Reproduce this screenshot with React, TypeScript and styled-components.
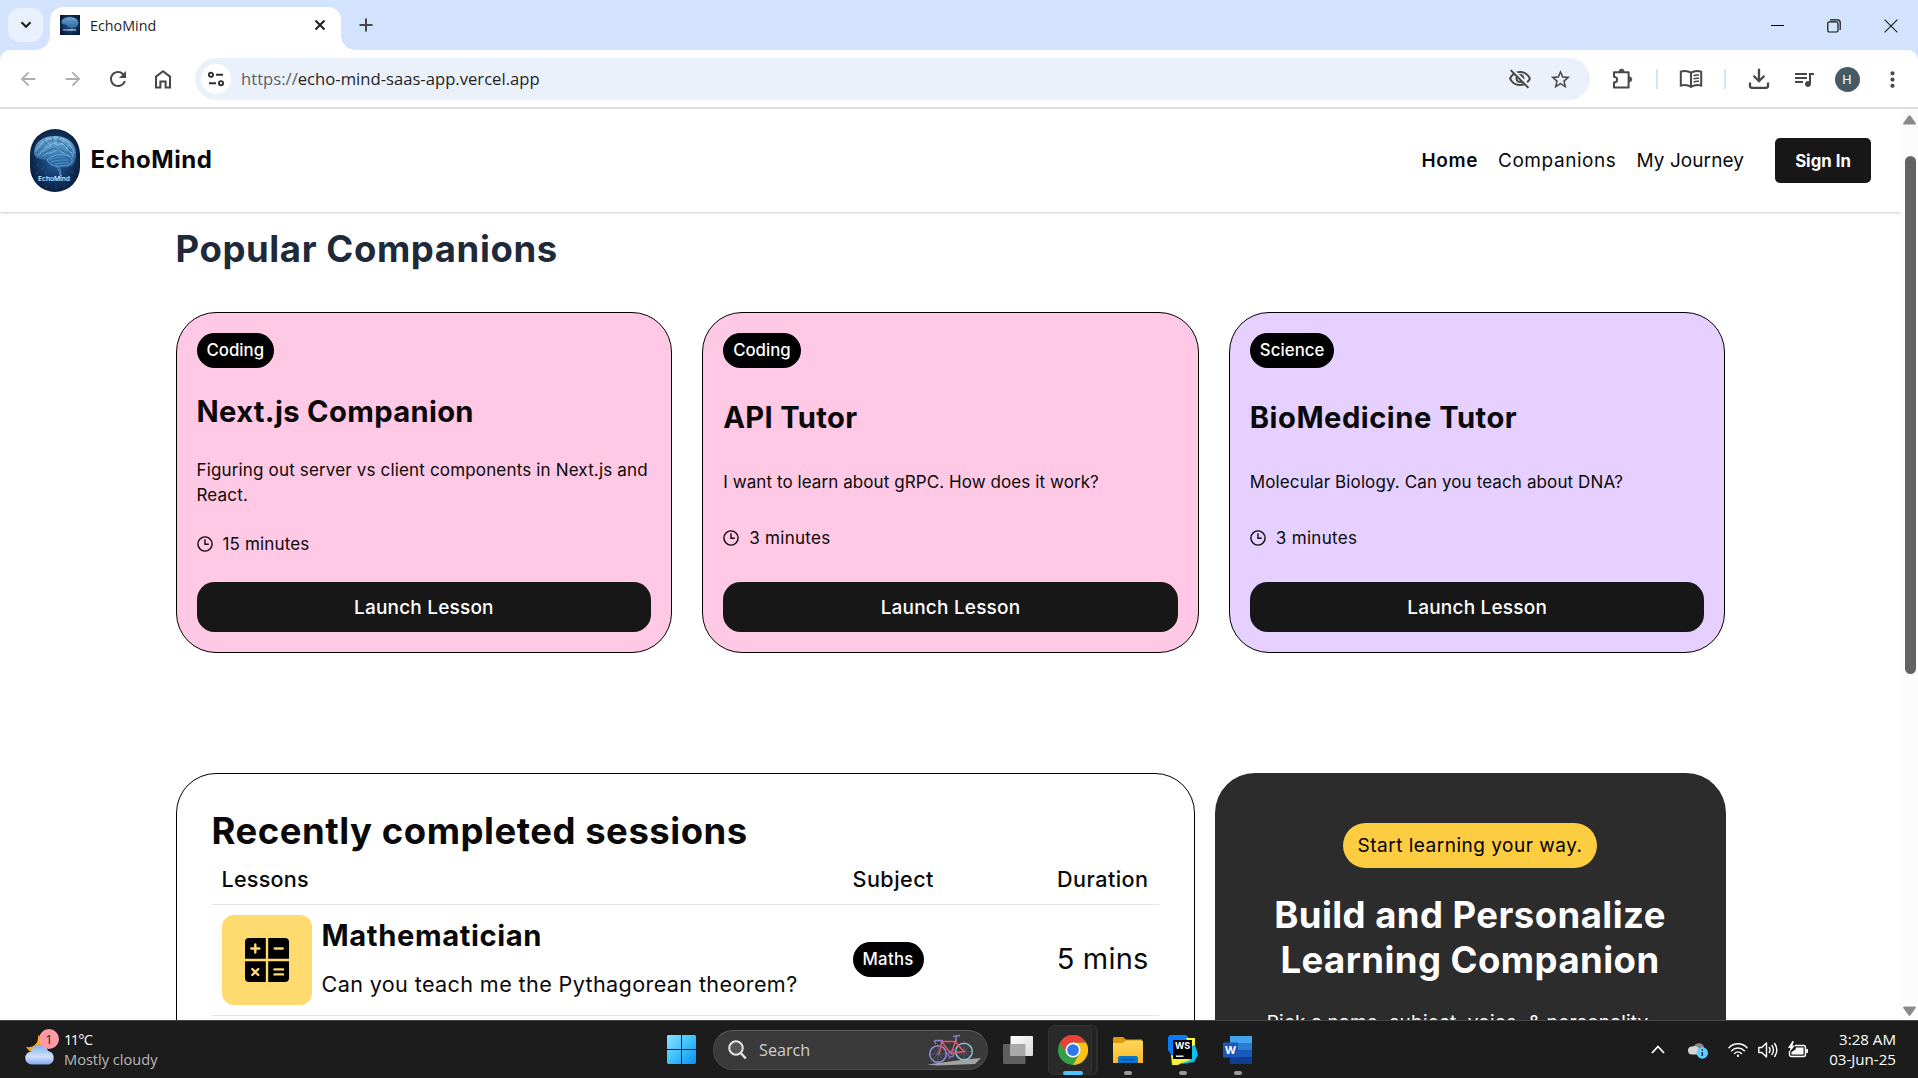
import React from 'react';
import styled, { createGlobalStyle } from 'styled-components';
import {
  MdArrowBack,
  MdArrowForward,
  MdMoreVert,
  MdOutlineVisibilityOff,
  MdQueueMusic,
  MdRefresh,
  MdStarBorder,
} from 'react-icons/md';

const GlobalStyle = createGlobalStyle`
  * { box-sizing: border-box; }
  body { margin: 0; background: #fff; }
  h1, h2, h3, p { margin: 0; }
  svg { display: block; flex: none; }
  button { border: 0; font: inherit; padding: 0; }
`;

const UI_FONT = '"Open Sans", "Noto Sans", sans-serif';
const SITE_FONT = 'Inter, "Open Sans", sans-serif';

interface Tracked {
  $ls?: number;
}

const tracking = ({ $ls = 0 }: Tracked) => `${$ls}px`;

/* ---------- Window ---------- */

const Screen = styled.div`
  width: 1918px;
  height: 1078px;
  display: flex;
  flex-direction: column;
  overflow: hidden;
  background: #fff;
  color: #0a0a0a;
`;

const TabStrip = styled.div`
  height: 50px;
  flex: none;
  display: flex;
  align-items: flex-end;
  padding-left: 8px;
  background: #d3e3fd;
  font-family: ${UI_FONT};
`;

const TabSearch = styled.button`
  width: 35px;
  height: 34px;
  margin-bottom: 8px;
  border-radius: 12px;
  background: #e9f1fe;
  display: grid;
  place-items: center;
`;

const Tab = styled.div`
  position: relative;
  width: 291px;
  height: 43px;
  margin-left: 7px;
  padding: 0 15px 7px 10px;
  display: flex;
  align-items: center;
  gap: 10px;
  border-radius: 13px 13px 0 0;
  background: #fff;

  &::before,
  &::after {
    content: '';
    position: absolute;
    bottom: 0;
    width: 14px;
    height: 14px;
  }
  &::before {
    left: -14px;
    background: radial-gradient(circle at 0 0, transparent 13.5px, #fff 14px);
  }
  &::after {
    right: -14px;
    background: radial-gradient(circle at 100% 0, transparent 13.5px, #fff 14px);
  }
`;

const TabTitle = styled.span`
  flex: 1;
  padding-top: 1px;
  font-size: 14.3px;
  line-height: 20px;
  color: #1f1f1f;
`;

const NewTab = styled.div`
  height: 50px;
  margin-left: 18px;
  display: flex;
  align-items: center;
`;

const WindowButtons = styled.div`
  height: 48px;
  margin: 0 -1px 0 auto;
  display: flex;
`;

const WindowButton = styled.div`
  width: 56.5px;
  display: grid;
  place-items: center;
`;

const ToolbarBack = styled.div`
  flex: none;
  background: #d3e3fd;
`;

const Toolbar = styled.div`
  height: 59px;
  display: flex;
  align-items: center;
  padding: 1px 0 0 5px;
  border-bottom: 2px solid #dedfe0;
  border-radius: 10px 10px 0 0;
  background: #fff;
  font-family: ${UI_FONT};
`;

const Slot = styled.div<{ $w: number; $color?: string }>`
  width: ${(p) => p.$w}px;
  height: 42px;
  flex: none;
  display: grid;
  place-items: center;
  color: ${(p) => p.$color ?? '#474747'};
`;

const Omnibox = styled.div`
  width: 1395px;
  height: 42px;
  margin-left: 10px;
  padding: 0 10px 0 6px;
  display: flex;
  align-items: center;
  border-radius: 21px;
  background: #ebf1fb;
`;

const SiteInfo = styled.div`
  width: 30px;
  height: 30px;
  border-radius: 50%;
  background: #fff;
  display: grid;
  place-items: center;
`;

const Url = styled.div`
  flex: 1;
  margin-left: 10px;
  font-size: 16.65px;
  line-height: 24px;
  color: #1f1f1f;
`;

const Scheme = styled.span`
  color: #5c5f63;
`;

const Divider = styled.div`
  width: 2px;
  height: 20px;
  background: #d3e3fd;
`;

const Avatar = styled.div`
  width: 25px;
  height: 25px;
  border-radius: 50%;
  background: #455a64;
  color: #fff;
  font: 400 13px/25px Roboto, sans-serif;
  text-align: center;
`;

/* ---------- Page ---------- */

const Viewport = styled.div`
  flex: 1;
  min-height: 0;
  display: flex;
  overflow: hidden;
`;

const Page = styled.div`
  flex: 1;
  overflow: hidden;
  font-family: ${SITE_FONT};
`;

const Navbar = styled.header`
  position: relative;
  height: 103px;
  padding: 0 30px;
  display: flex;
  align-items: center;
  justify-content: space-between;
  background: #fff;
  box-shadow: 0 1px 3px rgba(0, 0, 0, 0.13), 0 1px 2px rgba(0, 0, 0, 0.08);
`;

const Brand = styled.div`
  display: flex;
  align-items: center;
  gap: 10.5px;
`;

const BrandName = styled.span`
  margin-top: -2px;
  font-size: 24px;
  font-weight: 700;
  line-height: 35px;
  letter-spacing: 0.6px;
`;

const Nav = styled.nav`
  display: flex;
  align-items: center;
  gap: 20px;
`;

const NavLink = styled.span<Tracked & { $active?: boolean }>`
  font-size: 19px;
  line-height: 30px;
  font-weight: ${(p) => (p.$active ? 600 : 400)};
  letter-spacing: ${tracking};
`;

const SignIn = styled.button`
  width: 96px;
  height: 45px;
  margin-left: 11px;
  border-radius: 5px;
  background: #171717;
  color: #fafafa;
  font-size: 16.8px;
  font-weight: 700;
`;

const Content = styled.main`
  width: 1550px;
  margin-left: 175.5px;
  padding-top: 15px;
`;

const PageTitle = styled.h1`
  font-size: 36.5px;
  line-height: 45px;
  font-weight: 700;
  letter-spacing: 0.6px;
  color: #1e2939;
`;

const CompanionGrid = styled.section`
  margin-top: 40px;
  display: grid;
  grid-template-columns: repeat(3, 1fr);
  gap: 30px;
`;

const CompanionCard = styled.article<{ $bg: string }>`
  height: 341px;
  padding: 20px;
  display: flex;
  flex-direction: column;
  justify-content: space-between;
  border: 1px solid #000;
  border-radius: 40px;
  background: ${(p) => p.$bg};
`;

const SubjectBadge = styled.span<Tracked>`
  align-self: flex-start;
  height: 35px;
  padding: 0 10px;
  border-radius: 17.5px;
  background: #000;
  color: #fff;
  font-size: 16.8px;
  font-weight: 500;
  line-height: 35px;
  letter-spacing: ${tracking};
`;

const CompanionName = styled.h2<Tracked>`
  padding-bottom: 2px;
  font-size: 29.2px;
  line-height: 38px;
  font-weight: 700;
  letter-spacing: ${tracking};
`;

const Topic = styled.p<Tracked>`
  font-size: 17px;
  line-height: 25px;
  letter-spacing: ${tracking};
`;

const Minutes = styled.div<Tracked>`
  height: 25px;
  padding-bottom: 1px;
  display: flex;
  align-items: center;
  gap: 10px;
  font-size: 17px;
  letter-spacing: ${tracking};
`;

const LaunchButton = styled.button`
  height: 50px;
  flex: none;
  border-radius: 17.5px;
  background: #171717;
  color: #fff;
  font-size: 19px;
  font-weight: 500;
  letter-spacing: 0.2px;
`;

const HomeRow = styled.section`
  margin-top: 120px;
  display: flex;
  gap: 20px;
`;

const Sessions = styled.div`
  width: 1019px;
  height: 520px;
  padding: 35px;
  border: 1px solid #000;
  border-radius: 40px;
`;

const SectionTitle = styled.h2`
  font-size: 36.5px;
  line-height: 45px;
  font-weight: 700;
  letter-spacing: 0.52px;
`;

const SessionRow = styled.div<{ $h: number }>`
  height: ${(p) => p.$h}px;
  padding: 0 10px;
  display: grid;
  grid-template-columns: 631px 1fr auto;
  align-items: center;
  border-bottom: 1px solid #e5e5e5;
`;

const ColumnLabel = styled.span<Tracked>`
  font-size: 21.6px;
  font-weight: 500;
  line-height: 30px;
  letter-spacing: ${tracking};
`;

const Lesson = styled.div`
  display: flex;
  align-items: center;
  gap: 10px;
`;

const SubjectTile = styled.div`
  width: 90px;
  height: 90px;
  border-radius: 12px;
  background: #ffda6e;
  display: grid;
  place-items: center;
`;

const LessonText = styled.div`
  padding-bottom: 2px;
  display: flex;
  flex-direction: column;
  gap: 14px;
`;

const LessonName = styled.h3`
  font-size: 29.2px;
  line-height: 36px;
  font-weight: 700;
  letter-spacing: 0.6px;
`;

const LessonTopic = styled.p`
  font-size: 21.6px;
  line-height: 33px;
  letter-spacing: 0.37px;
  white-space: nowrap;
`;

const SubjectCell = styled.div`
  padding-bottom: 2px;
  display: flex;
`;

const Duration = styled.span`
  padding-bottom: 2px;
  font-size: 29px;
  line-height: 40px;
  letter-spacing: 0.2px;
  text-align: right;
`;

const Cta = styled.aside`
  width: 511px;
  height: 520px;
  padding-top: 50px;
  display: flex;
  flex-direction: column;
  align-items: center;
  gap: 25px;
  border-radius: 40px;
  background: #2c2c2c;
  color: #fff;
  text-align: center;
`;

const CtaBadge = styled.span`
  width: 254px;
  height: 45px;
  border-radius: 22.5px;
  background: #fccc41;
  color: #000;
  font-size: 19px;
  line-height: 46px;
  letter-spacing: 0.5px;
`;

const CtaTitle = styled.h2`
  font-size: 36.5px;
  line-height: 45px;
  font-weight: 700;
  letter-spacing: 0.45px;
`;

const CtaText = styled.p`
  font-size: 19px;
  line-height: 30px;
  letter-spacing: 0.22px;
`;

/* ---------- Scrollbar ---------- */

const Scrollbar = styled.div`
  width: 17px;
  flex: none;
  padding: 6px 0 4px;
  display: flex;
  flex-direction: column;
  align-items: center;
  background: #fcfcfc;
`;

const Thumb = styled.div`
  width: 11px;
  height: 518px;
  margin: 31px 0 auto 2px;
  border-radius: 6px;
  background: #636363;
`;

/* ---------- Taskbar ---------- */

const Taskbar = styled.footer`
  height: 58px;
  flex: none;
  display: flex;
  align-items: center;
  border-top: 1px solid #444;
  background: #1c1c1c;
  color: #fff;
  font-family: ${UI_FONT};
`;

const Weather = styled.div`
  width: 667px;
  padding-left: 24px;
  display: flex;
  align-items: center;
  gap: 7px;
`;

const WeatherIcon = styled.div`
  position: relative;
  width: 33px;
  height: 40px;
  margin-top: -2px;
`;

const AlertBadge = styled.span`
  position: absolute;
  top: 0;
  right: -2px;
  width: 20px;
  height: 20px;
  border-radius: 50%;
  background: #ff99a4;
  color: #222;
  font-size: 13px;
  line-height: 20px;
  text-align: center;
`;

const WeatherText = styled.div`
  padding-bottom: 2px;
  font-size: 14.6px;
  line-height: 20px;
  color: #b9b9b9;
`;

const Temperature = styled.div`
  color: #fff;
`;

const Degrees = styled.span`
  letter-spacing: -1.7px;
`;

const Unit = styled.span`
  margin-left: 1px;
  letter-spacing: -0.8px;
`;

const SearchPill = styled.div`
  width: 275px;
  height: 40px;
  margin: 0 15px 0 17px;
  padding: 0 5px 0 14px;
  display: flex;
  align-items: center;
  border: 1px solid #4a4a4a;
  border-top-color: #5e5e5e;
  border-radius: 20px;
  background: #3a3a3a;
`;

const SearchLabel = styled.span`
  flex: 1;
  margin-left: 12px;
  font-size: 16.2px;
  line-height: 24px;
  color: #d0d0d0;
`;

const AppSlot = styled.div<{ $gap?: number }>`
  position: relative;
  height: 57px;
  margin-left: ${(p) => p.$gap ?? 25}px;
  display: flex;
  align-items: center;
`;

const ActiveTile = styled.div`
  width: 44px;
  height: 50px;
  margin-right: 5px;
  padding-left: 5px;
  display: grid;
  place-items: center;
  border: 1px solid #343434;
  border-radius: 6px;
  background: #2a2a2a;
  box-shadow: 5px 0 0 -1px #222, 6px 0 0 0 #303030;
`;

const Indicator = styled.span<{ $active?: boolean }>`
  position: absolute;
  bottom: 3px;
  left: calc(50% - ${(p) => (p.$active ? 10 : 4)}px);
  width: ${(p) => (p.$active ? 20 : 8)}px;
  height: 4px;
  border-radius: 2px;
  background: ${(p) => (p.$active ? '#4cc2ff' : '#9a9a9a')};
`;

const Tray = styled.div`
  margin-left: auto;
  padding-right: 22px;
  display: flex;
  align-items: center;
`;

const TraySlot = styled.div<{ $w?: number }>`
  width: ${(p) => p.$w ?? 30}px;
  display: grid;
  place-items: center;
`;

const Clock = styled.div`
  width: 83px;
  padding-bottom: 2px;
  font-size: 15.1px;
  line-height: 20px;
  text-align: right;
`;

/* ---------- Drawings ---------- */

function BrainArt({ width, height, label }: { width: number; height: number; label?: boolean }) {
  const id = label ? 'logo' : 'fav';
  return (
    <svg width={width} height={height} viewBox="0 0 50 63" preserveAspectRatio="none">
      <defs>
        <radialGradient id={`${id}-bg`} cx="50%" cy="48%" r="58%">
          <stop offset="0" stopColor="#2a62a0" />
          <stop offset="0.55" stopColor="#143866" />
          <stop offset="1" stopColor="#081937" />
        </radialGradient>
        <linearGradient id={`${id}-b`} x1="0" y1="0" x2="0" y2="1">
          <stop offset="0" stopColor="#83c4e6" />
          <stop offset="0.5" stopColor="#4a8dc0" />
          <stop offset="1" stopColor="#24588f" />
        </linearGradient>
      </defs>
      <rect width="50" height="63" rx={label ? 25 : 0} fill={`url(#${id}-bg)`} />
      <path
        d="M4 24C4 13 13 7 25 7c12 0 21 7 21 17 0 5-1 9-3 12-3 3-8 3-12 2-6 1-10-1-13-5-2-3-4-2-8-3-4-1-6-3-6-6z"
        fill={`url(#${id}-b)`}
        opacity="0.85"
      />
      <g fill="none" stroke="#b9e8fb" strokeWidth="0.7" opacity="0.7" strokeLinecap="round">
        <path d="M6 22c1-5 4-4 5-7s4-3 6-5 4 1 6-1 4-1 6 0 4 0 6 2 4 2 5 5 4 4 4 8" />
        <path d="M8 26c3 1 2-4 5-4s2-5 5-4 3-5 6-4 3 3 6 1 4 2 6 3 1 5 4 5 2 3 3 5" />
        <path d="M12 27c3-1 4-3 7-3s5-2 8-3 4 3 7 3 4 3 6 4" />
        <path d="M17 13c1 2 3 1 3 4M25 9c-1 3 2 3 1 6M33 11c-1 2 1 3-1 5M39 16c-2 1-1 3-3 4" />
      </g>
      <g fill="none" stroke="#1d4f86" strokeWidth="0.8" opacity="0.7" strokeLinecap="round">
        <path d="M7 24c2-3 4-3 5-6s4-2 6-5 4 1 6-1 4 1 6 1 4 1 5 3 4 2 5 5" />
        <path d="M10 28c3-1 4-3 6-5s4-1 6-3 5 2 8 1 4 4 8 4" />
        <path d="M14 11c0 2 2 2 2 4M22 8c0 2 1 2 1 4M29 8c0 2-1 3 0 5M42 20c-2 0-2 3-4 3" />
      </g>
      <path
        d="M17 31c5-4 11-6 18-5 5 1 8 3 7 7-2 4-7 4-11 4-6 1-11-1-14-6z"
        fill="#2d6aa5"
        stroke="#8fcdee"
        strokeWidth="0.6"
      />
      <path
        d="M20 31c5-3 10-3 15-3M21 33c5-2 11-2 17-2M25 35c5-1 9-1 14-1"
        fill="none"
        stroke="#79bbe2"
        strokeWidth="0.5"
      />
      <path
        d="M26 37c3 3 4 7 4 12M29 38c2 3 2 7 2 11"
        fill="none"
        stroke="#5aa3d6"
        strokeWidth="1"
        opacity="0.8"
      />
      <g fill="#6db6e6" opacity="0.7">
        <circle cx="8" cy="36" r="0.5" />
        <circle cx="12" cy="40" r="0.5" />
        <circle cx="7" cy="44" r="0.5" />
        <circle cx="42" cy="43" r="0.5" />
        <circle cx="16" cy="58" r="0.5" />
        <circle cx="26" cy="59" r="0.5" />
        <circle cx="34" cy="57" r="0.5" />
      </g>
      <text
        x="24"
        y="52"
        textAnchor="middle"
        fontFamily="Inter, sans-serif"
        fontSize="6.7"
        fontWeight="500"
        fill="#e6f5ff"
      >
        EchoMind
      </text>
    </svg>
  );
}

function HomeIcon() {
  return (
    <svg width="18" height="20" viewBox="0 0 18 20" fill="none" stroke="#474747" strokeWidth="2">
      <path d="M2 7.6 9 2.2l7 5.4V18.6h-4.4v-6H6.4v6H2z" />
    </svg>
  );
}

function TuneIcon() {
  return (
    <svg width="18" height="18" viewBox="0 0 18 18" fill="none" stroke="#303030" strokeWidth="1.9">
      <circle cx="4" cy="4.8" r="2.1" />
      <path d="M9 4.8h7M2 13.2h7" />
      <circle cx="14" cy="13.2" r="2.1" />
    </svg>
  );
}

function PuzzleIcon() {
  return (
    <svg width="22" height="22" viewBox="0 0 22 22">
      <path
        d="M2 4.2h14.6v15.2H2v-4.8c4.2-.6 4.2-5.3 0-5.8z"
        fill="none"
        stroke="#474747"
        strokeWidth="2"
        strokeLinejoin="round"
      />
      <path d="M7 3.6a2.6 2.6 0 0 1 5.2 0zM17.2 8.7a2.6 2.6 0 0 1 0 5.2z" fill="#474747" stroke="#474747" strokeWidth="0.6" />
    </svg>
  );
}

function ReaderIcon() {
  return (
    <svg width="24" height="20" viewBox="0 0 24 20" fill="none" stroke="#474747" strokeWidth="2">
      <path d="M12 3.6C9 1.8 5 1.6 1.8 2.6v14c3.4-.9 7-.7 10.200 1.200 3.200-1.900 6.800-2.100 10.200-1.200v-14C19 1.600 15 1.800 12 3.600zM12 3.600v14" />
      <path d="M14.500 6.800q2.500-1 5.500-.7M14.500 9.900q2.500-1 5.500-.7M14.500 13q2.500-1 5.500-.7" strokeWidth="1.500" />
    </svg>
  );
}

function DownloadIcon() {
  return (
    <svg width="22" height="22" viewBox="0 0 22 22" fill="none" stroke="#474747" strokeWidth="2.300">
      <path d="M11 .8v12M5.600 7.800 11 13.200l5.400-5.400" />
      <path d="M2 14.500v3.300q0 2 2 2h14q2 0 2-2v-3.300" />
    </svg>
  );
}

function ClockIcon() {
  return (
    <svg width="16" height="16" viewBox="0 0 16 16" fill="none" stroke="#0a0a0a" strokeWidth="1.400">
      <circle cx="8" cy="8" r="7.100" />
      <path d="M8 3.300V8.200h3.800" />
    </svg>
  );
}

function MathIcon() {
  return (
    <svg width="44" height="44" viewBox="0 0 44 44">
      <path d="M4 0h16.800v20.800H0V4a4 4 0 0 1 4-4zM23.200 0H40a4 4 0 0 1 4 4v16.800H23.200zM0 23.200h20.800V44H4a4 4 0 0 1-4-4zM23.200 23.200H44V40a4 4 0 0 1-4 4H23.200z" />
      <g stroke="#ffda6e" strokeWidth="2.400" strokeLinecap="round">
        <path d="M10.300 6.500v8M6.300 10.500h8M29.700 10.500h8M7.300 31l6 6M13.300 31l-6 6M29.500 31.400h8.500M29.500 36.400h8.500" />
      </g>
    </svg>
  );
}

function WeatherArt() {
  return (
    <svg width="33" height="40" viewBox="0 0 33 40">
      <defs>
        <linearGradient id="cloud" x1="0" y1="0" x2="0" y2="1">
          <stop offset="0" stopColor="#7fb0f5" />
          <stop offset="0.6" stopColor="#cfe0fa" />
          <stop offset="1" stopColor="#7fa8ee" />
        </linearGradient>
      </defs>
      <path d="M14 6c1 9-5 13-12 12 3 5 8 6 13 5 6-3 6-12-1-17z" fill="#f9a71d" />
      <path
        d="M8 35.500a6.500 6.500 0 0 1-.5-13 8.500 8.500 0 0 1 16.500-.5 7 7 0 0 1 1 13.500z"
        fill="url(#cloud)"
      />
    </svg>
  );
}

function WindowsLogo() {
  return (
    <svg width="29" height="29" viewBox="0 0 29 29">
      <defs>
        <linearGradient id="win" x1="0" y1="0" x2="1" y2="1">
          <stop offset="0" stopColor="#8be2ff" />
          <stop offset="0.5" stopColor="#3fc1fb" />
          <stop offset="1" stopColor="#0a8ff5" />
        </linearGradient>
      </defs>
      <path d="M1 0h13v14H0V1zM15 0h13l1 1v13H15zM0 15h14v14H1l-1-1zM15 15h14v13l-1 1H15z" fill="url(#win)" />
    </svg>
  );
}

function Bicycle() {
  return (
    <svg width="55" height="32" viewBox="0 0 55 32" fill="none">
      <path d="M0 30.500 38 25.500 54 24 48 30 10 31.500z" fill="#a3a3a3" />
      <g strokeWidth="1.500">
        <circle cx="11" cy="20" r="8.300" stroke="#8d8fe0" />
        <circle cx="37" cy="17.500" r="8.300" stroke="#86c3d8" />
      </g>
      <g stroke="#8a86b8" strokeWidth="0.400">
        <path d="M11 12v16M3 20h16M5.500 14.500l11 11M16.500 14.500l-11 11M37 9.500v16M29 17.500h16M31.500 12l11 11M42.500 12l-11 11" />
      </g>
      <path d="M12 20 15 7.500h13l9 10-13 2.500L15 8M24 20l5-14" stroke="#e0586c" strokeWidth="1.500" />
      <path d="M8 6.500h7l-1 2.500M9 10l-2-3.500M29 8V2M26 2.500l7-1" stroke="#8f86cf" strokeWidth="1.400" />
      <circle cx="24" cy="20" r="2.800" stroke="#7a73c0" strokeWidth="1.400" />
      <path d="M21 24h3M26 16h3" stroke="#7a73c0" />
    </svg>
  );
}

function TaskViewIcon() {
  return (
    <svg width="30" height="28" viewBox="0 0 30 28">
      <defs>
        <linearGradient id="tv" x1="0" y1="0" x2="1" y2="1">
          <stop offset="0" stopColor="#fff" />
          <stop offset="1" stopColor="#d8d8d8" />
        </linearGradient>
      </defs>
      <rect y="8" width="22.500" height="20" rx="1" fill="#5f5f5f" />
      <rect x="7.500" width="22.500" height="20" rx="1" fill="url(#tv)" />
      <path d="M7.500 8h15v12h-15z" fill="#a9a9a9" />
    </svg>
  );
}

function ChromeLogo() {
  return (
    <svg width="30" height="30" viewBox="0 0 48 48">
      <circle cx="24" cy="24" r="24" fill="#34a048" />
      <path d="M34.400 30 24 48A24 24 0 0 0 44.800 12H24z" fill="#fbc116" />
      <path d="M13.600 30 3.200 12A24 24 0 0 1 44.800 12H24z" fill="#ea4335" />
      <circle cx="24" cy="24" r="12" fill="#fff" />
      <circle cx="24" cy="24" r="9.400" fill="#2f77ea" />
    </svg>
  );
}

function FolderIcon() {
  return (
    <svg width="30" height="28" viewBox="0 0 30 28">
      <defs>
        <linearGradient id="fold" x1="0" y1="0" x2="0" y2="1">
          <stop offset="0" stopColor="#ffd75e" />
          <stop offset="1" stopColor="#f9b81f" />
        </linearGradient>
      </defs>
      <path d="M1 1h9l3 2.500h16V12H0V2z" fill="#dd9a09" />
      <path d="M0 7h10l3-2.500h16l1 1V27H0z" fill="url(#fold)" />
      <path d="M5 27v-5q0-2 2-2h16q2 0 2 2v5z" fill="#0f74cc" />
      <path d="M8.500 23.500h13" stroke="#0a4f92" strokeWidth="1.200" />
    </svg>
  );
}

function WebStormIcon() {
  return (
    <svg width="30" height="30" viewBox="0 0 30 30">
      <path d="M2 0h16l5 5-4 16H4L0 15V2z" fill="#087cfa" />
      <path d="M18 3h9v8l-4 3z" fill="#fcf84a" />
      <path d="M21 12l6-2 3 10-4 7-12 2z" fill="#07c3f2" />
      <path d="M3 20l20 5-9 3-4 2H4z" fill="#f3f03a" />
      <path d="M5 5h19v19H5z" fill="#000" />
      <path d="M8 20.500h7.500v1.400H8z" fill="#fff" />
      <text x="14.500" y="14" textAnchor="middle" fontFamily="Inter, sans-serif" fontWeight="700" fontSize="9" fill="#fff">
        WS
      </text>
    </svg>
  );
}

function WordIcon() {
  return (
    <svg width="29" height="28" viewBox="0 0 29 28">
      <path d="M7 0h22v7H7z" fill="#41a5ee" />
      <path d="M7 7h22v7H7z" fill="#2b7cd3" />
      <path d="M7 14h22v7H7z" fill="#185abd" />
      <path d="M7 21h22v7H7z" fill="#103f91" />
      <rect y="6.500" width="15" height="15" rx="1" fill="#1a57b8" />
      <text x="7.500" y="18" textAnchor="middle" fontFamily="Inter, sans-serif" fontWeight="700" fontSize="11" fill="#fff">
        W
      </text>
    </svg>
  );
}

function CloudInfoIcon() {
  return (
    <svg width="20" height="18" viewBox="0 0 20 18">
      <path d="M6 5a5.500 5.500 0 0 1 10 1v6H6z" fill="#8a8a8a" />
      <path d="M4 13.500a4 4 0 0 1 0-8A5 5 0 0 1 11 8v5.500z" fill="#d4d4d4" />
      <circle cx="14.300" cy="12" r="5.700" fill="#60cdff" />
      <path d="M14.300 11v4M14.300 8.200v1.500" stroke="#10303f" strokeWidth="1.500" />
    </svg>
  );
}

function WifiIcon() {
  return (
    <svg width="20" height="16" viewBox="0 0 20 16" fill="none" stroke="#fff" strokeWidth="1.500" strokeLinecap="round">
      <path d="M1 5.700a12.500 12.500 0 0 1 18 0M3.700 8.700a8.800 8.800 0 0 1 12.600 0M6.500 11.500a5 5 0 0 1 7 0" />
      <circle cx="10" cy="13.800" r="1.200" fill="#fff" stroke="none" />
    </svg>
  );
}

function SpeakerIcon() {
  return (
    <svg width="20" height="18" viewBox="0 0 20 18" fill="none" stroke="#fff" strokeWidth="1.400" strokeLinecap="round" strokeLinejoin="round">
      <path d="M.8 6.500h3L8.500 2v14l-4.700-4.500h-3z" />
      <path d="M11.300 6.500q1.600 2.500 0 5M14 4.500q3 4.500 0 9M16.700 2.500q4.300 6.500 0 13" />
    </svg>
  );
}

function BatteryIcon() {
  return (
    <svg width="20" height="18" viewBox="0 0 20 18">
      <path d="M7 4.500h8.500q2 0 2 2v7q0 2-2 2h-12q-2 0-2-2V10" fill="none" stroke="#fff" strokeWidth="1.400" />
      <path d="M8 6.500h7.500v7h-12V11l4-2.500zM18.200 8H20v4h-1.800zM4.500 0 0 7h2.500L1.500 11 7 4.500H4.300L6 .5z" fill="#fff" />
    </svg>
  );
}

/* ---------- Data ---------- */

const companions = [
  {
    subject: 'Coding', badgeLs: 0, name: 'Next.js Companion', nameLs: 0.32,
    topic: 'Figuring out server vs client components in Next.js and React.', topicLs: 0.16,
    minutes: '15 minutes', minutesLs: 0.15, color: '#ffc8e4',
  },
  {
    subject: 'Coding', badgeLs: 0, name: 'API Tutor', nameLs: 0.3,
    topic: 'I want to learn about gRPC. How does it work?', topicLs: 0.08,
    minutes: '3 minutes', minutesLs: 0.3, color: '#ffc8e4',
  },
  {
    subject: 'Science', badgeLs: 0.05, name: 'BioMedicine Tutor', nameLs: 0.48,
    topic: 'Molecular Biology. Can you teach about DNA?', topicLs: 0.11,
    minutes: '3 minutes', minutesLs: 0.3, color: '#e5d0ff',
  },
];

export default function App() {
  return (
    <Screen>
      <GlobalStyle />

      <TabStrip>
        <TabSearch aria-label="Search tabs">
          <svg width="12" height="8" viewBox="0 0 12 8" fill="none" stroke="#1f1f1f" strokeWidth="2.200">
            <path d="m1.500 1.200 4.500 4.500 4.500-4.500" />
          </svg>
        </TabSearch>
        <Tab>
          <BrainArt width={20} height={20} />
          <TabTitle>EchoMind</TabTitle>
          <svg width="12" height="12" viewBox="0 0 12 12" stroke="#1f1f1f" strokeWidth="2">
            <path d="m1.500 1.500 9 9M10.500 1.500l-9 9" />
          </svg>
        </Tab>
        <NewTab>
          <svg width="14" height="14" viewBox="0 0 14 14" stroke="#474747" strokeWidth="2">
            <path d="M7 .5v13M.5 7h13" />
          </svg>
        </NewTab>
        <WindowButtons>
          <WindowButton>
            <svg width="13" height="13" viewBox="0 0 13 13"><path d="M0 5h13v1H0z" /></svg>
          </WindowButton>
          <WindowButton>
            <svg width="14" height="14" viewBox="0 0 14 14" fill="none" stroke="#111" strokeWidth="1.200">
              <rect x=".8" y="2.800" width="10.200" height="10.200" rx="1.500" />
              <path d="M3 .9h7.500q2.700 0 2.700 2.700V11" />
            </svg>
          </WindowButton>
          <WindowButton>
            <svg width="14" height="14" viewBox="0 0 14 14" stroke="#222" strokeWidth="1.200">
              <path d="m.6.600 12.800 12.800M13.400.600.6 13.400" />
            </svg>
          </WindowButton>
        </WindowButtons>
      </TabStrip>

      <ToolbarBack>
        <Toolbar>
          <Slot $w={45} $color="#adadad"><MdArrowBack size={22} /></Slot>
          <Slot $w={45} $color="#adadad"><MdArrowForward size={22} /></Slot>
          <Slot $w={45}><MdRefresh size={24} /></Slot>
          <Slot $w={45}><HomeIcon /></Slot>
          <Omnibox>
            <SiteInfo><TuneIcon /></SiteInfo>
            <Url><Scheme>https://</Scheme>echo-mind-saas-app.vercel.app</Url>
            <Slot $w={40}><MdOutlineVisibilityOff size={24} /></Slot>
            <Slot $w={40}><MdStarBorder size={23} /></Slot>
          </Omnibox>
          <Slot $w={66}><PuzzleIcon /></Slot>
          <Divider />
          <Slot $w={66}><ReaderIcon /></Slot>
          <Divider />
          <Slot $w={66}><DownloadIcon /></Slot>
          <Slot $w={23}><MdQueueMusic size={24} /></Slot>
          <Slot $w={64}><Avatar>H</Avatar></Slot>
          <Slot $w={26}><MdMoreVert size={25} /></Slot>
        </Toolbar>
      </ToolbarBack>

      <Viewport>
        <Page>
          <Navbar>
            <Brand>
              <BrainArt width={50} height={63} label />
              <BrandName>EchoMind</BrandName>
            </Brand>
            <Nav>
              <NavLink $active $ls={0.6}>Home</NavLink>
              <NavLink $ls={0.55}>Companions</NavLink>
              <NavLink $ls={0.08}>My Journey</NavLink>
              <SignIn>Sign In</SignIn>
            </Nav>
          </Navbar>

          <Content>
            <PageTitle>Popular Companions</PageTitle>
            <CompanionGrid>
              {companions.map((c) => (
                <CompanionCard key={c.name} $bg={c.color}>
                  <SubjectBadge $ls={c.badgeLs}>{c.subject}</SubjectBadge>
                  <CompanionName $ls={c.nameLs}>{c.name}</CompanionName>
                  <Topic $ls={c.topicLs}>{c.topic}</Topic>
                  <Minutes $ls={c.minutesLs}>
                    <ClockIcon />
                    {c.minutes}
                  </Minutes>
                  <LaunchButton>Launch Lesson</LaunchButton>
                </CompanionCard>
              ))}
            </CompanionGrid>

            <HomeRow>
              <Sessions>
                <SectionTitle>Recently completed sessions</SectionTitle>
                <SessionRow $h={51}>
                  <ColumnLabel $ls={0.22}>Lessons</ColumnLabel>
                  <ColumnLabel $ls={0.45}>Subject</ColumnLabel>
                  <ColumnLabel $ls={0.45}>Duration</ColumnLabel>
                </SessionRow>
                <SessionRow $h={111}>
                  <Lesson>
                    <SubjectTile><MathIcon /></SubjectTile>
                    <LessonText>
                      <LessonName>Mathematician</LessonName>
                      <LessonTopic>Can you teach me the Pythagorean theorem?</LessonTopic>
                    </LessonText>
                  </Lesson>
                  <SubjectCell><SubjectBadge $ls={0.3}>Maths</SubjectBadge></SubjectCell>
                  <Duration>5 mins</Duration>
                </SessionRow>
              </Sessions>
              <Cta>
                <CtaBadge>Start learning your way.</CtaBadge>
                <CtaTitle>Build and Personalize<br />Learning Companion</CtaTitle>
                <CtaText>Pick a name, subject, voice, &amp; personality —</CtaText>
              </Cta>
            </HomeRow>
          </Content>
        </Page>

        <Scrollbar>
          <svg width="13" height="10" viewBox="0 0 13 10"><path d="M5.500.8q1-1.200 2 0l5.200 7.200q.5 1.500-1 1.500h-10.400q-1.500 0-1-1.500z" fill="#8a8a8a" /></svg>
          <Thumb />
          <svg width="13" height="10" viewBox="0 0 13 10"><path d="M5.500 9.200q1 1.200 2 0l5.200-7.200q.5-1.500-1-1.500h-10.400q-1.500 0-1 1.500z" fill="#8a8a8a" /></svg>
        </Scrollbar>
      </Viewport>

      <Taskbar>
        <Weather>
          <WeatherIcon>
            <WeatherArt />
            <AlertBadge>1</AlertBadge>
          </WeatherIcon>
          <WeatherText>
            <Temperature><Degrees>11</Degrees><Unit>°C</Unit></Temperature>
            Mostly cloudy
          </WeatherText>
        </Weather>
        <WindowsLogo />
        <SearchPill>
          <svg width="19" height="20" viewBox="0 0 19 20" fill="none" stroke="#e4e4e4" strokeWidth="2">
            <circle cx="8" cy="8" r="6.800" fill="#555" />
            <path d="m12.800 13 5 5.500" strokeWidth="2.400" />
          </svg>
          <SearchLabel>Search</SearchLabel>
          <Bicycle />
        </SearchPill>
        <TaskViewIcon />
        <AppSlot $gap={15}>
          <ActiveTile><ChromeLogo /></ActiveTile>
          <Indicator $active />
        </AppSlot>
        <AppSlot $gap={16}><FolderIcon /><Indicator /></AppSlot>
        <AppSlot><WebStormIcon /><Indicator /></AppSlot>
        <AppSlot><WordIcon /><Indicator /></AppSlot>
        <Tray>
          <TraySlot>
            <svg width="14" height="9" viewBox="0 0 14 9" fill="none" stroke="#fff" strokeWidth="1.800">
              <path d="m1 8 6-6.500L13 8" />
            </svg>
          </TraySlot>
          <TraySlot $w={50}><CloudInfoIcon /></TraySlot>
          <TraySlot><WifiIcon /></TraySlot>
          <TraySlot><SpeakerIcon /></TraySlot>
          <TraySlot><BatteryIcon /></TraySlot>
          <Clock>3:28 AM<br />03-Jun-25</Clock>
        </Tray>
      </Taskbar>
    </Screen>
  );
}
